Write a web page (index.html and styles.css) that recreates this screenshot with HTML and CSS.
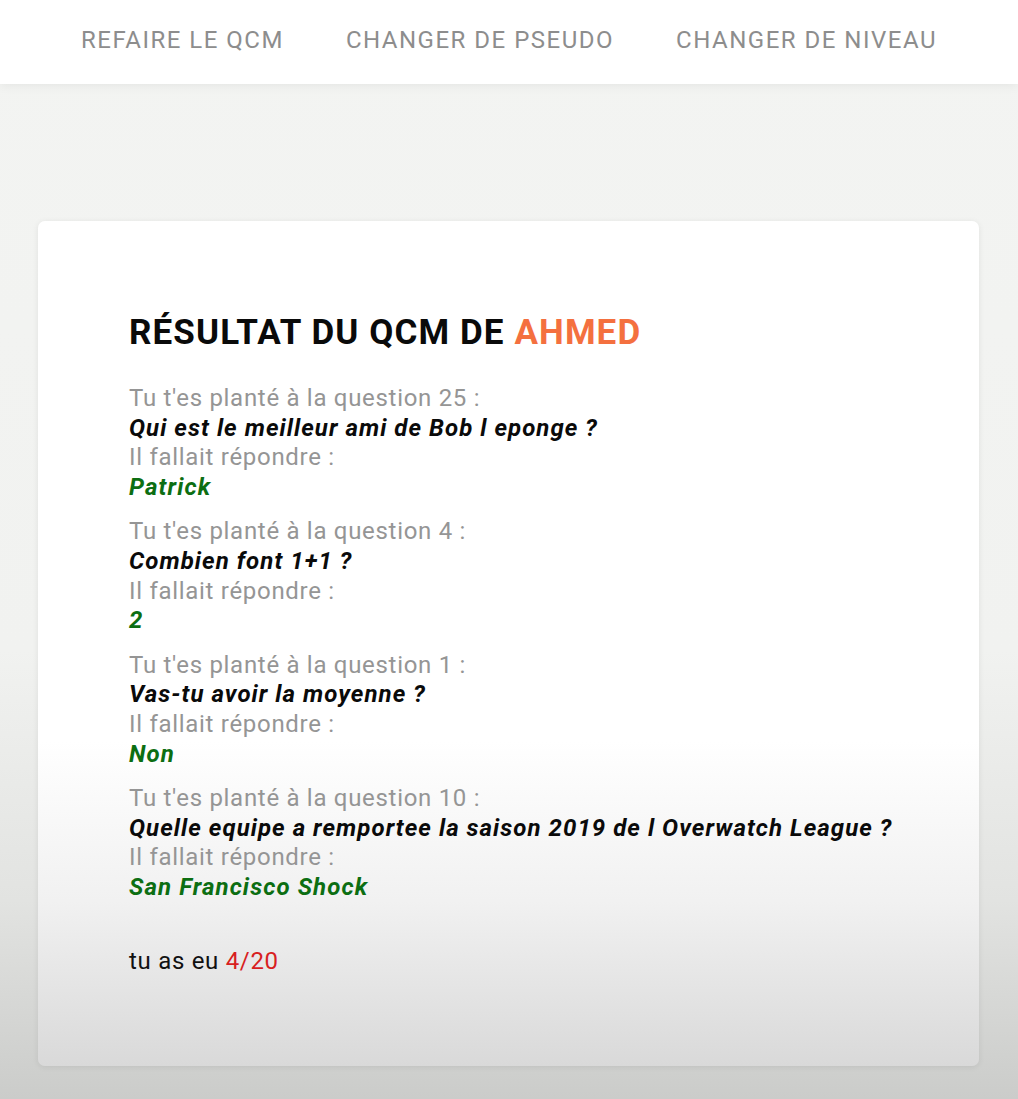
FILE: index.html
```html
<!DOCTYPE html>
<html lang="fr">
<head>
<meta charset="utf-8">
<title>Résultat du QCM</title>
<link rel="stylesheet" href="styles.css">
</head>
<body>
<nav class="topnav">
  <a class="navlink" href="#">Refaire le QCM</a>
  <a class="navlink" href="#">Changer de pseudo</a>
  <a class="navlink" href="#">Changer de niveau</a>
</nav>
<main class="page">
  <section class="card">
    <h1 class="title">Résultat du QCM de <span class="pseudo">Ahmed</span></h1>
    <div class="mistakes">
      <div class="mistake">
        <div class="label">Tu t'es planté à la question 25 :</div>
        <div class="question">Qui est le meilleur ami de Bob l eponge ?</div>
        <div class="label">Il fallait répondre :</div>
        <div class="answer">Patrick</div>
      </div>
      <div class="mistake">
        <div class="label">Tu t'es planté à la question 4 :</div>
        <div class="question">Combien font 1+1 ?</div>
        <div class="label">Il fallait répondre :</div>
        <div class="answer">2</div>
      </div>
      <div class="mistake">
        <div class="label">Tu t'es planté à la question 1 :</div>
        <div class="question">Vas-tu avoir la moyenne ?</div>
        <div class="label">Il fallait répondre :</div>
        <div class="answer">Non</div>
      </div>
      <div class="mistake">
        <div class="label">Tu t'es planté à la question 10 :</div>
        <div class="question">Quelle equipe a remportee la saison 2019 de l Overwatch League ?</div>
        <div class="label">Il fallait répondre :</div>
        <div class="answer">San Francisco Shock</div>
      </div>
    </div>
    <p class="score">tu as eu <span class="score-value">4/20</span></p>
  </section>
</main>
</body>
</html>
```
FILE: styles.css
```css
html, body {
  margin: 0;
  padding: 0;
}
body {
  font-family: Roboto, "Liberation Sans", sans-serif;
  min-height: 1099px;
  background: linear-gradient(to bottom, #f3f4f2 0px, #f1f2f0 650px, #e2e3e1 900px, #cbccca 1099px);
}
.topnav {
  height: 84px;
  background: #ffffff;
  display: flex;
  justify-content: center;
  align-items: center;
  gap: 62px;
  box-shadow: 0 2px 10px rgba(0, 0, 0, 0.06);
  position: relative;
}
.navlink {
  text-decoration: none;
  color: #8d8d8d;
  text-transform: uppercase;
  font-size: 24px;
  letter-spacing: 1.5px;
  padding-bottom: 4px;
}
.page {
  padding: 137px 39px 33px 38px;
}
.card {
  background: linear-gradient(to bottom, #ffffff 0px, #ffffff 520px, #f1f1f1 680px, #d9d9d9 845px);
  border-radius: 7px;
  box-shadow: 0 1px 6px rgba(0, 0, 0, 0.08);
  height: 845px;
  box-sizing: border-box;
  padding: 88px 40px 0 91px;
}
.title {
  margin: 0 0 27px 0;
  font-size: 35px;
  font-weight: 700;
  color: #0a0a0a;
  text-transform: uppercase;
  letter-spacing: 1.1px;
  line-height: 48px;
}
.pseudo {
  color: #f4703f;
}
.mistakes {
  display: flex;
  flex-direction: column;
  gap: 14.5px;
}
.mistake {
  font-size: 24px;
  line-height: 29.7px;
}
.label {
  color: #959595;
  letter-spacing: 0.7px;
}
.question {
  color: #0a0a0a;
  font-weight: 700;
  font-style: italic;
  letter-spacing: 1.05px;
}
.answer {
  color: #0c6e12;
  font-weight: 700;
  font-style: italic;
  letter-spacing: 1.1px;
}
.score {
  margin: 44px 0 0 0;
  font-size: 24px;
  line-height: 29.7px;
  letter-spacing: 0.7px;
  color: #111111;
}
.score-value {
  color: #d81f1f;
}
```
